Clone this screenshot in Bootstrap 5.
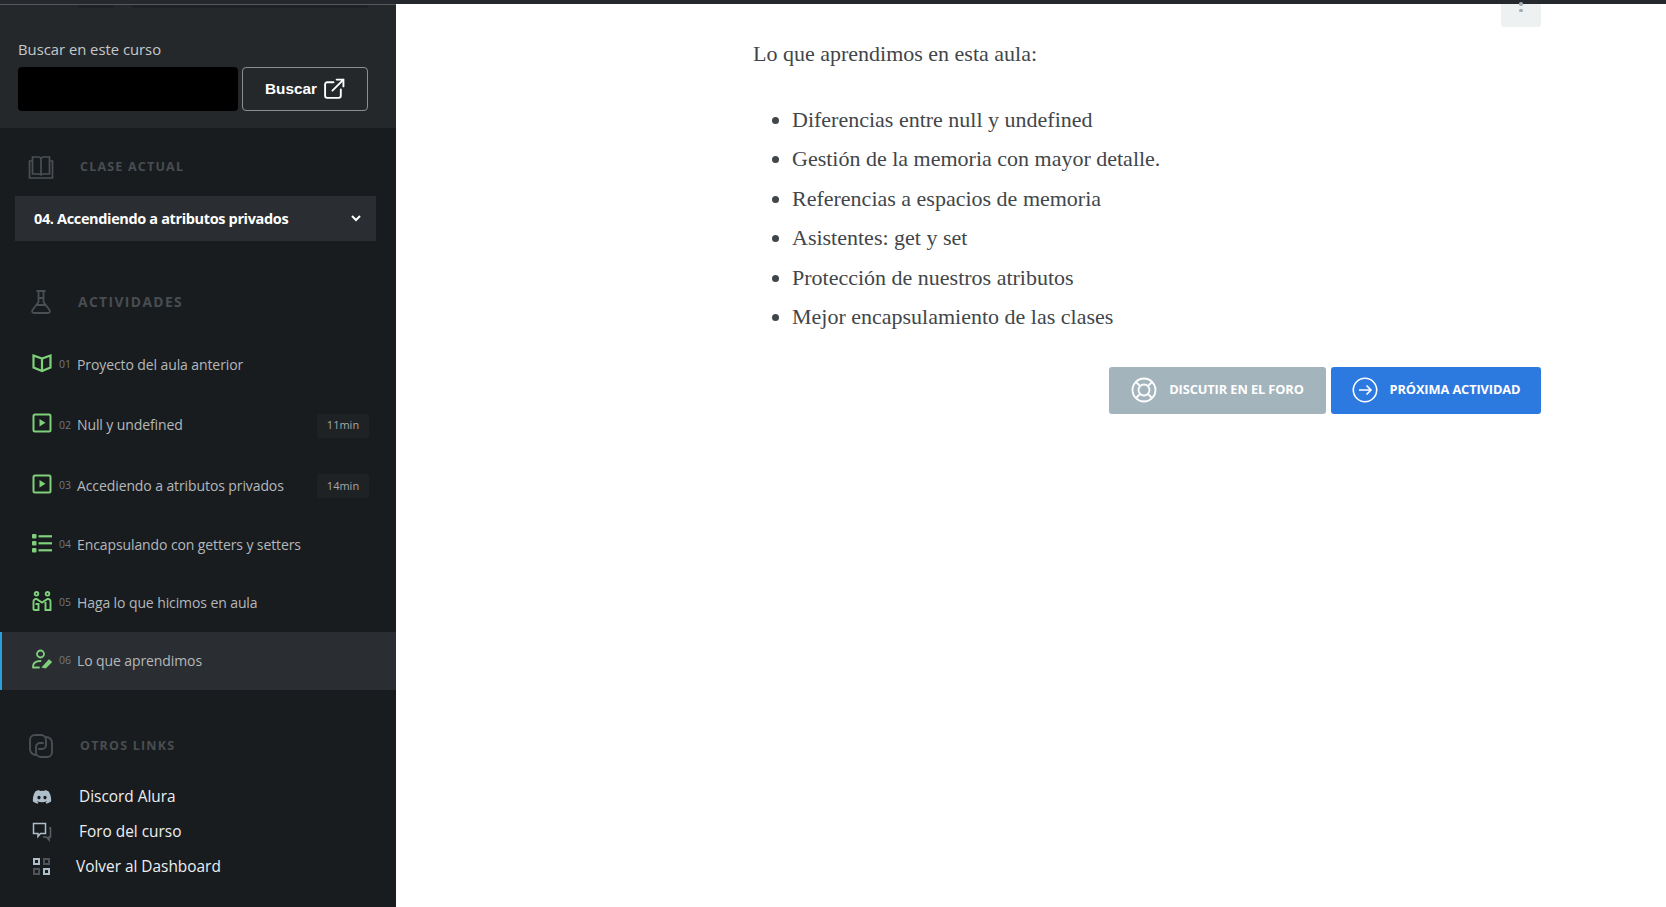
<!doctype html>
<html lang="es">
  <head>
    <meta charset="UTF-8" />
    <meta name="viewport" content="width=device-width, initial-scale=1.0" />
    <link rel="stylesheet" href="https://cdn.jsdelivr.net/npm/bootstrap@5.3.0/dist/css/bootstrap.min.css" />
    <title>Lo que aprendimos</title>
    <style>
      html, body { height: 100%; overflow: hidden; }
      body { background: #fff; font-family: "Open Sans", sans-serif; }
      .top-strip { height: 4px; background: #25292d; }
      .page-wrap { height: 903px; }

      .side { width: 396px; flex: none; background: #191c1f; color: #c9ced2; overflow: hidden; }
      .search-box { height: 124px; background: #25282b; padding: 0 28px 0 18px; border-top: 1px solid #55595d; }
      .tab-marks { height: 3px; margin-bottom: 31px; gap: 17px; }
      .tab-marks span { display: block; height: 3px; background: #1f2225; border-radius: 0 0 4px 4px; }
      .tab-a { width: 38px; margin-left: 59px; }
      .tab-b { width: 236px; }
      .search-box label { font-size: 14.8px; line-height: 20px; color: #c4c8cb; margin-bottom: 8px; display: block; }
      .search-input { width: 220px; height: 44px; background: #000; border: 0; border-radius: 4px; }
      .search-btn { width: 126px; height: 44px; margin-left: 4px; border: 1px solid #8b8f93; border-radius: 4px; color: #fff;
        font-family: "Liberation Sans", sans-serif; font-weight: 700; font-size: 15.3px; padding: 0; background: transparent; gap: 6px; }
      .search-btn svg { width: 22px; height: 22px; }
      .sec-head { font-size: 12.5px; font-weight: 700; letter-spacing: 1.2px; color: #484d52; }
      .sec-head.big { font-size: 13.8px; letter-spacing: 1.4px; }
      .sec-ico { width: 26px; height: 26px; color: #4a4f54; flex: none; }
      .head-clase { height: 68px; padding-top: 10px; padding-left: 28px; gap: 26px; }
      .lesson-pick { margin-left: 15px; width: 361px; height: 45px; background: #2a2d31; color: #fff; font-weight: 700; font-size: 14.5px;
        padding: 0 15px 0 19px; letter-spacing: -.36px; }
      .head-act { height: 62px; margin-top: 31px; padding-left: 28px; padding-bottom: 2px; gap: 24px; }
      .act-list { margin-top: 1px; }
      .act-row { padding: 0 27px 2px 32px; font-size: 14px; letter-spacing: -.1px; color: #b4b8bb; }
      .act-row svg { width: 20px; height: 20px; color: #7fd07a; flex: none; margin-top: -3px; }
      .act-row.on { background: #2a2d31; box-shadow: inset 2px 0 0 #2b9fd8; }
      .h60 { height: 60px; }
      .h61 { height: 61px; }
      .h58 { height: 58px; }
      .num { font-size: 10.5px; letter-spacing: 0; color: #74787c; margin-left: 7px; margin-right: 5px; margin-top: 2px; width: 13px; }
      .mins { width: 52px; height: 24px; background: #1f2225; border-radius: 3px; font-size: 11px; letter-spacing: 0; color: #a5a9ac; margin-top: 2px; }
      .head-otros { height: 32px; margin-top: 40px; padding-left: 28px; gap: 26px; }
      .extra-row { height: 35px; padding-left: 32px; font-size: 15.4px; font-weight: 500; color: #eceff1; }
      .extra-row svg { width: 20px; height: 20px; flex: none; color: #aebfcb; }
      .extra-list { margin-top: 17px; }
      .gap-a { margin-left: 27px; }
      .gap-b { margin-left: 24px; }

      .content { padding: 0 125px 0 357px; color: #41464a; font-family: "Liberation Serif", serif; font-size: 22px; }
      .dots-box { width: 40px; height: 23px; background: #eef1f2; border-radius: 0 0 3px 3px; }
      .dots-box i { display: block; width: 3.5px; height: 3.5px; border-radius: 50%; background: #a0adb5; margin: 0 auto 3px; position: relative; top: -2px; }
      .intro { margin: 12px 0 0; line-height: 30px; }
      .learned { margin: 31px 0 0; padding-left: 39px; }
      .learned li { height: 39.4px; line-height: 39.4px; }
      .foot-btns { margin-top: 31px; gap: 5px; }
      .act-btn { height: 47px; border: 0; border-radius: 3px; color: #fff; font-family: "Open Sans", sans-serif; font-weight: 700; font-size: 12.8px;
        padding: 0 0 2px; gap: 12px; letter-spacing: -.1px; }
      .act-btn svg { width: 26px; height: 26px; }
      .btn-foro { width: 217px; background: #a3b4bd; }
      .btn-prox { width: 210px; background: #2c79e0; }
    </style>
  </head>

  <body>
    <div class="top-strip"></div>
    <div class="d-flex page-wrap">
      <!-- sidebar -->
      <aside class="side">
        <div class="search-box">
          <div class="d-flex tab-marks"><span class="tab-a"></span><span class="tab-b"></span></div>
          <label for="buscar">Buscar en este curso</label>
          <div class="d-flex">
            <input id="buscar" class="search-input" type="text" />
            <button class="search-btn d-flex align-items-center justify-content-center" type="button">
              Buscar
              <svg viewBox="0 0 21 21" fill="none" stroke="currentColor" stroke-width="1.800" stroke-linecap="round"><path d="M10 4H4a2 2 0 0 0-2 2v11a2 2 0 0 0 2 2h11a2 2 0 0 0 2-2v-6"/><path d="M9 12 19.500 1.500M13 1.500h6.500V8"/></svg>
            </button>
          </div>
        </div>

        <div class="d-flex align-items-center head-clase">
          <svg class="sec-ico" viewBox="0 0 26 26" fill="none" stroke="currentColor" stroke-width="1.700"><path d="M4 7H1.500v17h23V7H22"/><path d="M4.500 3h5.500c1.500 0 3 .8 3 2 0-1.200 1.500-2 3-2h5.500v17H16c-1.500 0-3 .6-3 1.500 0-.9-1.500-1.500-3-1.500H4.500zM13 5v16"/></svg>
          <span class="sec-head">CLASE ACTUAL</span>
        </div>
        <div class="lesson-pick d-flex align-items-center justify-content-between">
          <span>04. Accendiendo a atributos privados</span>
          <svg width="10" height="7" viewBox="0 0 10 7" fill="none" stroke="#fff" stroke-width="2"><path d="m1 1 4 4 4-4"/></svg>
        </div>

        <div class="d-flex align-items-center head-act">
          <svg class="sec-ico" viewBox="0 0 26 26" fill="none" stroke="currentColor" stroke-width="1.800"><path d="M8.500 2h9M10.500 2v7h5V2M10.500 9v4L4.500 21c-1 1.500 0 3 1.500 3h14c1.500 0 2.500-1.500 1.500-3l-6-8V9M8 16h10"/></svg>
          <span class="sec-head big">ACTIVIDADES</span>
        </div>

        <div class="act-list">
          <div class="act-row h60 d-flex align-items-center">
            <svg viewBox="0 0 20 20" fill="none" stroke="currentColor" stroke-width="2.200"><path d="M1.500 2.500 10 5.500l8.500-3v12L10 18 1.500 14.500zM10 5.500V18"/></svg>
            <span class="num">01</span><span>Proyecto del aula anterior</span>
          </div>
          <div class="act-row h61 d-flex align-items-center">
            <svg viewBox="0 0 20 20" fill="none" stroke="currentColor" stroke-width="2"><rect x="1.500" y="1.500" width="17" height="17" rx="1.500"/><path d="M7.500 6v7.500l6-3.700z" fill="currentColor" stroke="none"/></svg>
            <span class="num">02</span><span class="flex-grow-1">Null y undefined</span>
            <span class="mins d-flex align-items-center justify-content-center">11min</span>
          </div>
          <div class="act-row h60 d-flex align-items-center">
            <svg viewBox="0 0 20 20" fill="none" stroke="currentColor" stroke-width="2"><rect x="1.500" y="1.500" width="17" height="17" rx="1.500"/><path d="M7.500 6v7.500l6-3.700z" fill="currentColor" stroke="none"/></svg>
            <span class="num">03</span><span class="flex-grow-1">Accediendo a atributos privados</span>
            <span class="mins d-flex align-items-center justify-content-center">14min</span>
          </div>
          <div class="act-row h58 d-flex align-items-center">
            <svg viewBox="0 0 20 20" fill="currentColor"><rect x="0" y="1" width="4.500" height="4.500" rx="1"/><rect x="0" y="8" width="4.500" height="4.500" rx="1"/><rect x="0" y="15" width="4.500" height="4.500" rx="1"/><rect x="6.500" y="2.200" width="13.500" height="2.200"/><rect x="6.500" y="9.200" width="13.500" height="2.200"/><rect x="6.500" y="16.200" width="13.500" height="2.200"/></svg>
            <span class="num">04</span><span>Encapsulando con getters y setters</span>
          </div>
          <div class="act-row h58 d-flex align-items-center">
            <svg viewBox="0 0 20 20" fill="none" stroke="currentColor" stroke-width="1.900"><circle cx="4.500" cy="2.800" r="1.800"/><circle cx="15.500" cy="2.800" r="1.800"/><path d="M1.500 19v-8.500a2.500 2.500 0 0 1 3-2.500l5.500 3.500 5.500-3.500a2.500 2.500 0 0 1 3 2.500V19h-5v-8M1.500 19h5v-6H3.500"/></svg>
            <span class="num">05</span><span>Haga lo que hicimos en aula</span>
          </div>
          <div class="act-row on h58 d-flex align-items-center">
            <svg viewBox="0 0 20 20" fill="none" stroke="currentColor" stroke-width="1.800" stroke-linecap="round"><circle cx="8.500" cy="5" r="3.500"/><path d="M1 18c0-4 3-6 7.500-6M1 18.500h6"/><path d="m11 18 6-6.500 2 1.500-5.500 5.500z" fill="currentColor"/></svg>
            <span class="num">06</span><span>Lo que aprendimos</span>
          </div>
        </div>

        <div class="d-flex align-items-center head-otros">
          <svg class="sec-ico" viewBox="0 0 26 26" fill="none" stroke="currentColor" stroke-width="1.900" stroke-linecap="round"><path d="M8 22a6 6 0 0 1-6-6V7a5 5 0 0 1 5-5h6a5 5 0 0 1 5 5v5a4 4 0 0 1-4 4h-3"/><path d="M18 4a6 6 0 0 1 6 6v9a5 5 0 0 1-5 5h-6a5 5 0 0 1-5-5v-5a4 4 0 0 1 4-4h3"/></svg>
          <span class="sec-head">OTROS LINKS</span>
        </div>

        <div class="extra-list">
          <div class="extra-row d-flex align-items-center">
            <svg viewBox="0 0 20 20" fill="currentColor"><path d="M16.500 4.200A15 15 0 0 0 12.800 3l-.5 1a14 14 0 0 0-4.600 0l-.5-1a15 15 0 0 0-3.700 1.200C1.200 7.700.6 11.100.9 14.500A15 15 0 0 0 5.500 16.800l1-1.500-1.600-.8.400-.3a10.600 10.600 0 0 0 9.400 0l.4.300-1.600.8 1 1.500a15 15 0 0 0 4.600-2.300c.4-3.900-.6-7.300-2.600-10.300zM7 12.300c-.9 0-1.600-.8-1.600-1.800S6.100 8.700 7 8.700s1.600.8 1.600 1.800-.7 1.800-1.600 1.800zm6 0c-.9 0-1.600-.8-1.600-1.800s.7-1.800 1.600-1.800 1.600.8 1.600 1.800-.7 1.800-1.600 1.800z"/></svg>
            <span class="gap-a">Discord Alura</span>
          </div>
          <div class="extra-row d-flex align-items-center">
            <svg viewBox="0 0 20 20" fill="none" stroke="currentColor" stroke-width="1.500"><path d="M1.500 1.500h12v10H8.500L6 14.500v-3H1.500z"/><path d="M17 6h1.500v9H17v3l-2.500-3H11" stroke="#5a6065"/></svg>
            <span class="gap-a">Foro del curso</span>
          </div>
          <div class="extra-row d-flex align-items-center">
            <svg viewBox="0 0 20 20" fill="none" stroke-width="2"><rect x="2" y="2" width="5" height="5" stroke="#aebfcb"/><rect x="12" y="2" width="5" height="5" stroke="#4d5358"/><rect x="2" y="12" width="5" height="5" stroke="#4d5358"/><rect x="12" y="12" width="5" height="5" stroke="#aebfcb"/></svg>
            <span class="gap-b">Volver al Dashboard</span>
          </div>
        </div>
      </aside>

      <!-- contenido -->
      <main class="content flex-grow-1">
        <div class="d-flex justify-content-end">
          <div class="dots-box"><i></i><i></i></div>
        </div>
        <p class="intro">Lo que aprendimos en esta aula:</p>
        <ul class="learned">
          <li>Diferencias entre null y undefined</li>
          <li>Gestión de la memoria con mayor detalle.</li>
          <li>Referencias a espacios de memoria</li>
          <li>Asistentes: get y set</li>
          <li>Protección de nuestros atributos</li>
          <li>Mejor encapsulamiento de las clases</li>
        </ul>
        <div class="d-flex justify-content-end foot-btns">
          <button class="act-btn btn-foro d-flex align-items-center justify-content-center" type="button">
            <svg viewBox="0 0 26 26" fill="none" stroke="currentColor" stroke-width="1.800"><circle cx="13" cy="13" r="11.500"/><circle cx="13" cy="13" r="5.500"/><path d="m5 5 4 4M21 5l-4 4M5 21l4-4M21 21l-4-4"/></svg>
            DISCUTIR EN EL FORO
          </button>
          <button class="act-btn btn-prox d-flex align-items-center justify-content-center" type="button">
            <svg viewBox="0 0 26 26" fill="none" stroke="currentColor" stroke-width="1.600"><circle cx="13" cy="13" r="11.700"/><path d="M7 13h12M14.500 8.500 19 13l-4.500 4.500"/></svg>
            PRÓXIMA ACTIVIDAD
          </button>
        </div>
      </main>
    </div>
    <script src="https://cdn.jsdelivr.net/npm/bootstrap@5.3.0/dist/js/bootstrap.bundle.min.js"></script>
  </body>
</html>
